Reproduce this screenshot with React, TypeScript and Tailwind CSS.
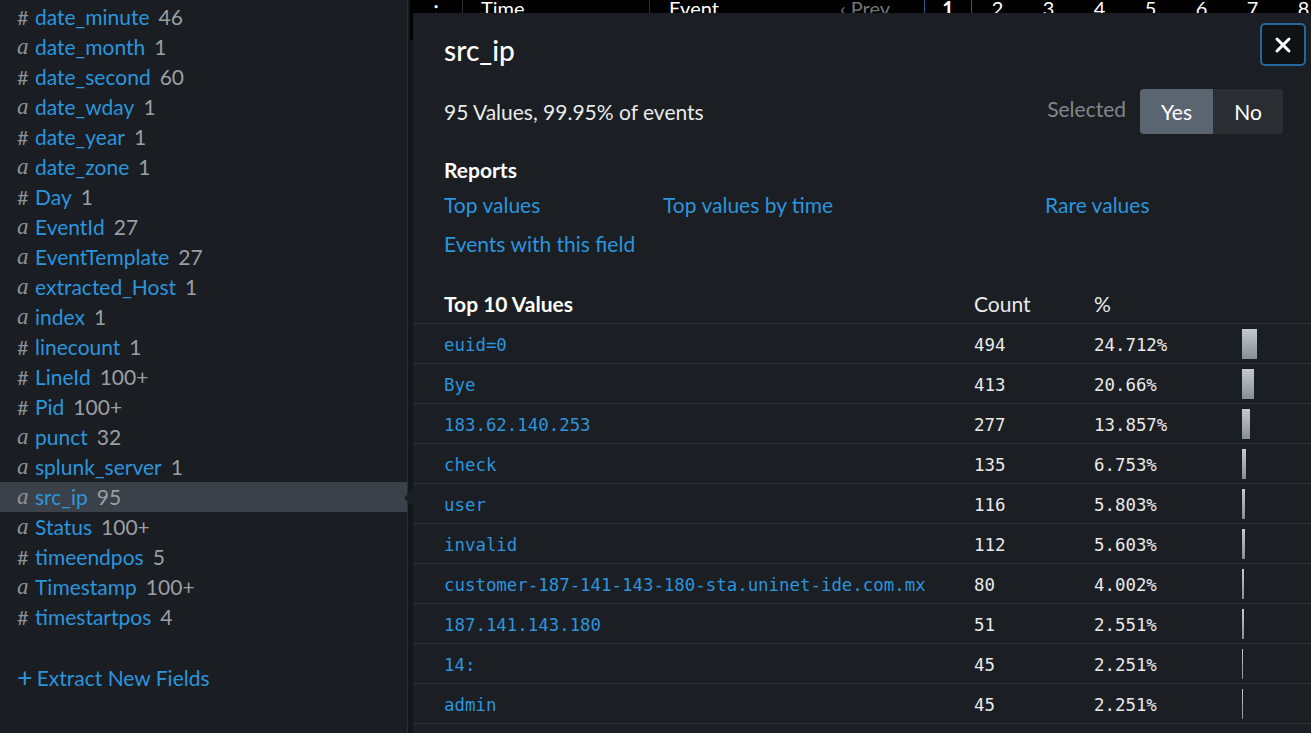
import { X } from 'lucide-react'

type Field = { type: '#' | 'a'; name: string; count: string }

const fields: Field[] = [
    { type: '#', name: 'date_minute', count: '46' },
    { type: 'a', name: 'date_month', count: '1' },
    { type: '#', name: 'date_second', count: '60' },
    { type: 'a', name: 'date_wday', count: '1' },
    { type: '#', name: 'date_year', count: '1' },
    { type: 'a', name: 'date_zone', count: '1' },
    { type: '#', name: 'Day', count: '1' },
    { type: 'a', name: 'EventId', count: '27' },
    { type: 'a', name: 'EventTemplate', count: '27' },
    { type: 'a', name: 'extracted_Host', count: '1' },
    { type: 'a', name: 'index', count: '1' },
    { type: '#', name: 'linecount', count: '1' },
    { type: '#', name: 'LineId', count: '100+' },
    { type: '#', name: 'Pid', count: '100+' },
    { type: 'a', name: 'punct', count: '32' },
    { type: 'a', name: 'splunk_server', count: '1' },
    { type: 'a', name: 'src_ip', count: '95' },
    { type: 'a', name: 'Status', count: '100+' },
    { type: '#', name: 'timeendpos', count: '5' },
    { type: 'a', name: 'Timestamp', count: '100+' },
    { type: '#', name: 'timestartpos', count: '4' },
]

const values = [
    { value: 'euid=0', count: 494, pct: 24.712 },
    { value: 'Bye', count: 413, pct: 20.66 },
    { value: '183.62.140.253', count: 277, pct: 13.857 },
    { value: 'check', count: 135, pct: 6.753 },
    { value: 'user', count: 116, pct: 5.803 },
    { value: 'invalid', count: 112, pct: 5.603 },
    { value: 'customer-187-141-143-180-sta.uninet-ide.com.mx', count: 80, pct: 4.002 },
    { value: '187.141.143.180', count: 51, pct: 2.551 },
    { value: '14:', count: 45, pct: 2.251 },
    { value: 'admin', count: 45, pct: 2.251 },
]

const pages = ['2', '3', '4', '5', '6', '7', '8']

function FieldRow({ field }: { field: Field }) {
    const selected = field.name === 'src_ip'
    return (
        <div
            className={`h-[30px] flex items-center pl-[17px] text-[21px] ${
                selected ? 'bg-[#3b4148]' : ''
            }`}
        >
            <span
                className={`w-[18px] text-[#8d9296] ${
                    field.type === 'a'
                        ? "font-['Liberation_Serif',serif] italic text-[23px]"
                        : 'text-[20px]'
                }`}
            >
                {field.type}
            </span>
            <span className="text-[#2b95de]">{field.name}</span>
            <span className="ml-[9px] text-[#9a9fa4]">{field.count}</span>
        </div>
    )
}

function Sidebar() {
    return (
        <div className="w-[407px] shrink-0 bg-[#1a1d21] pt-[2px] font-['Lato',sans-serif]">
            {fields.map((f) => (
                <FieldRow key={f.name} field={f} />
            ))}
            <div className="mt-[30px] pl-[17px] text-[21px] text-[#2b95de] flex items-center gap-[4px]">
                <span className="text-[27px] leading-none -mt-[3px]">+</span>
                <span>Extract New Fields</span>
            </div>
        </div>
    )
}

function EventsHeader() {
    return (
        <div className="h-[40px] bg-black flex items-start overflow-hidden whitespace-nowrap text-[20px] leading-[16px] text-white font-['Lato',sans-serif]">
            <div className="w-[53px] shrink-0 h-full border-r border-[#2b2f33] flex justify-center font-bold">:</div>
            <div className="w-[187px] shrink-0 h-full border-r border-[#2b2f33] pl-[18px]">Time</div>
            <div className="pl-[19px] w-[190px] shrink-0">Event</div>
            <div className="text-[#70757a] w-[84px] shrink-0">&lsaquo; Prev</div>
            <div className="w-[48px] shrink-0 h-full border-x border-[#1f5f94] flex justify-center font-bold">1</div>
            {pages.map((p) => (
                <div key={p} className="w-[51px] shrink-0 flex justify-center">
                    {p}
                </div>
            ))}
        </div>
    )
}

function FieldModal() {
    return (
        <div className="absolute top-[13px] left-[5px] right-0 bottom-0 bg-[#1b1e22] font-['Lato',sans-serif] text-[#e9eaeb]">
            <div className="absolute left-[-9px] top-[476px] w-0 h-0 border-y-[9px] border-y-transparent border-r-[9px] border-r-[#1b1e22]" />
            <button className="absolute top-[10px] right-[5px] w-[46px] h-[43px] rounded-[5px] border-[2px] border-[#23679b] bg-[#0f1215] flex items-center justify-center text-white">
                <X size={24} strokeWidth={3} />
            </button>

            <div className="px-[31px]">
                <h2 className="pt-[19px] text-[28px] leading-[36px] font-medium text-white">src_ip</h2>

                <div className="mt-[21px] h-[45px] flex items-center justify-between">
                    <span className="text-[21px]">95 Values, 99.95% of events</span>
                    <div className="flex items-center mr-[-3px]">
                        <span className="text-[21px] text-[#80868c] mr-[14px] -mt-[6px]">Selected</span>
                        <div className="flex h-[45px] rounded-[4px] overflow-hidden text-[21px] text-white">
                            <div className="w-[73px] bg-[#5b6571] flex items-center justify-center">Yes</div>
                            <div className="w-[70px] bg-[#2a2e33] flex items-center justify-center">No</div>
                        </div>
                    </div>
                </div>

                <div className="mt-[24px] text-[21px] leading-[24px] font-bold text-white">Reports</div>
                <div className="mt-[11px] grid grid-cols-[219px_382px_1fr] gap-y-[15px] text-[21px] leading-[24px] text-[#2b95de]">
                    <span>Top values</span>
                    <span>Top values by time</span>
                    <span>Rare values</span>
                    <span>Events with this field</span>
                </div>
            </div>

            <div className="mt-[28px]">
                <div className="h-[40px] grid grid-cols-[530px_120px_148px_1fr] items-center pl-[31px] border-b border-[#2d3136] text-[21px]">
                    <span className="font-bold text-white">Top 10 Values</span>
                    <span>Count</span>
                    <span>%</span>
                    <span />
                </div>
                {values.map((v) => (
                    <div
                        key={v.value}
                        className="h-[40px] grid grid-cols-[530px_120px_148px_1fr] items-center pl-[31px] pt-[3px] border-b border-[#2d3136] font-['DejaVu_Sans_Mono',monospace] text-[17.4px]"
                    >
                        <span className="text-[#2b95de] whitespace-nowrap">{v.value}</span>
                        <span className="text-[#e9eaeb]">{v.count}</span>
                        <span className="text-[#e9eaeb]">{v.pct}%</span>
                        <div className="h-[30px] flex -mt-[3px]">
                            <div
                                className="h-full bg-linear-to-b from-[#c5cad0] to-[#868e98]"
                                style={{ width: Math.max(1, Math.round(v.pct * 0.6)) }}
                            />
                        </div>
                    </div>
                ))}
            </div>
        </div>
    )
}

export default function App() {
    return (
        <div className="w-[1311px] h-[733px] overflow-hidden flex bg-[#1a1d21]">
            <Sidebar />
            <div className="relative flex-1 min-w-0 bg-[#14171a] border-l border-[#2c3035]">
                <div className="ml-[2px]">
                    <EventsHeader />
                </div>
                <FieldModal />
            </div>
        </div>
    )
}
